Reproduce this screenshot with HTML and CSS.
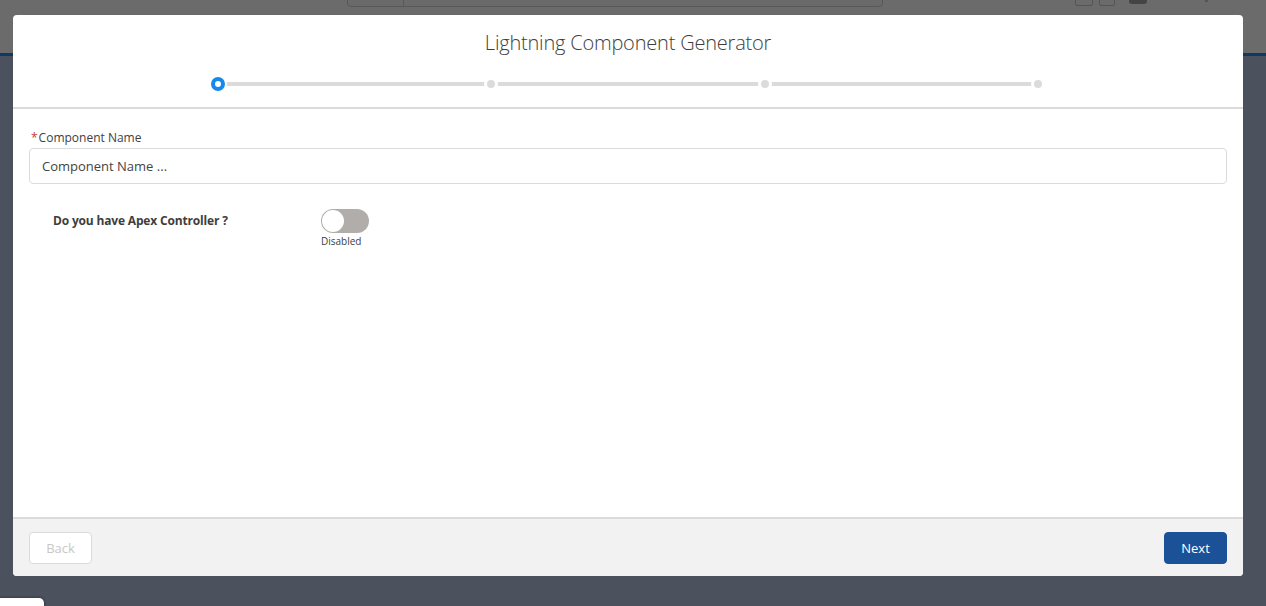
FILE: index.html
```html
<!DOCTYPE html>
<html lang="en">
<head>
<meta charset="utf-8">
<title>Lightning Component Generator</title>
<link rel="stylesheet" href="styles.css">
</head>
<body>
<div class="page">
  <div class="global-header">
    <div class="search-bar"><span class="search-scope"></span></div>
    <div class="header-icons">
      <span class="hicon box"></span>
      <span class="hicon box small"></span>
      <span class="hicon blob"></span>
      <span class="hicon dot"></span>
    </div>
  </div>
  <div class="brand-line"></div>
  <div class="workspace"></div>
  <div class="utility-tab"></div>

  <section class="modal">
    <header class="modal-header">
      <h2 class="modal-title">Lightning Component Generator</h2>
      <div class="progress">
        <div class="progress-bar"></div>
        <ol class="progress-list">
          <li class="step active"></li>
          <li class="step"></li>
          <li class="step"></li>
          <li class="step"></li>
        </ol>
      </div>
    </header>
    <div class="modal-body">
      <label class="field-label"><abbr class="required">*</abbr>Component Name</label>
      <input class="text-input" type="text" placeholder="Component Name ...">
      <div class="toggle-row">
        <span class="toggle-label">Do you have Apex Controller ?</span>
        <div class="toggle">
          <span class="toggle-track"><span class="toggle-knob"></span></span>
          <span class="toggle-state">Disabled</span>
        </div>
      </div>
    </div>
    <footer class="modal-footer">
      <button class="btn btn-neutral" disabled>Back</button>
      <button class="btn btn-brand">Next</button>
    </footer>
  </section>
</div>
</body>
</html>
```
FILE: styles.css
```css
html, body {
  margin: 0;
  padding: 0;
}
body {
  font-family: "Open Sans", "Liberation Sans", sans-serif;
  color: #3e3e3c;
  width: 1266px;
  height: 606px;
  overflow: hidden;
}
.page {
  position: relative;
  width: 1266px;
  height: 606px;
  display: flex;
  flex-direction: column;
  background: #4b515d;
}
.global-header {
  height: 53px;
  background: #6b6b6b;
  position: relative;
  flex: none;
}
.search-bar {
  position: absolute;
  left: 347px;
  top: -6px;
  width: 534px;
  height: 11px;
  border: 1px solid #585858;
  border-radius: 4px;
  background: #6a6a6a;
}
.search-scope {
  position: absolute;
  left: 55px;
  top: 0;
  bottom: 0;
  border-left: 1px solid #585858;
}
.header-icons {
  position: absolute;
  left: 1075px;
  top: -4px;
  display: flex;
  gap: 6px;
  align-items: flex-start;
}
.hicon.box {
  width: 16px;
  height: 8px;
  border: 1px solid #555;
  border-radius: 2px;
}
.hicon.box.small { width: 14px; }
.hicon.blob {
  width: 18px;
  height: 8px;
  background: #444;
  border-radius: 3px;
  margin-left: 8px;
}
.hicon.dot {
  width: 3px;
  height: 6px;
  background: #555;
  margin-left: 52px;
}
.brand-line {
  height: 3px;
  background: #0d3a63;
  flex: none;
}
.workspace { flex: 1; }
.utility-tab {
  position: absolute;
  left: 0;
  bottom: -4px;
  width: 44px;
  height: 12px;
  background: #fff;
  border-radius: 0 5px 0 0;
  box-shadow: 0 0 3px rgba(0,0,0,0.5);
}

.modal {
  position: absolute;
  left: 13px;
  top: 15px;
  width: 1230px;
  height: 561px;
  background: #fff;
  border-radius: 4px;
  display: flex;
  flex-direction: column;
  overflow: hidden;
}
.modal-header {
  border-bottom: 2px solid #dddbda;
  padding: 15px 0 0;
  height: 77px;
  display: flex;
  flex-direction: column;
  align-items: center;
  flex: none;
}
.modal-title {
  margin: 0;
  font-family: "Open Sans", sans-serif;
  font-weight: 300;
  font-size: 20px;
  line-height: 26px;
  color: #3e3e3c;
  letter-spacing: -0.2px;
}
.progress {
  position: relative;
  width: 836px;
  margin-top: 20px;
  height: 16px;
}
.progress-bar {
  position: absolute;
  left: 8px;
  right: 8px;
  top: 6px;
  height: 4px;
  background: #dddbda;
}
.progress-list {
  position: relative;
  list-style: none;
  margin: 0;
  padding: 0;
  display: flex;
  justify-content: space-between;
  height: 16px;
  align-items: center;
}
.step {
  width: 8px;
  height: 8px;
  margin: 0 4px;
  border-radius: 50%;
  background: #dddbda;
  box-shadow: 0 0 0 3px #fff;
}
.step.active {
  width: 6px;
  height: 6px;
  margin: 0 1px;
  background: #fff;
  border: 4px solid #1589ee;
  box-shadow: 0 0 0 2px #fff;
}

.modal-body {
  flex: 1;
  padding: 20px 16px 0;
  display: flex;
  flex-direction: column;
  align-items: flex-start;
}
.field-label {
  font-size: 12px;
  line-height: 18px;
  color: #3e3e3c;
  padding-left: 2px;
}
.required {
  color: #c23934;
  text-decoration: none;
  border: 0;
  margin-right: 1px;
}
.text-input {
  box-sizing: border-box;
  width: 100%;
  height: 36px;
  margin-top: 1px;
  border: 1px solid #dddbda;
  border-radius: 4px;
  padding: 0 12px;
  font-family: "Open Sans", sans-serif;
  font-size: 13px;
  color: #3e3e3c;
  outline: none;
}
.text-input::placeholder {
  color: #444;
  opacity: 1;
}
.toggle-row {
  margin-top: 25px;
  padding-left: 24px;
  display: flex;
  align-items: flex-start;
}
.toggle-label {
  width: 268px;
  font-size: 12px;
  font-weight: 700;
  line-height: 24px;
  color: #3e3e3c;
  letter-spacing: -0.17px;
}
.toggle {
  display: flex;
  flex-direction: column;
  align-items: flex-start;
}
.toggle-track {
  width: 48px;
  height: 24px;
  border-radius: 12px;
  background: #b0adab;
  display: flex;
  align-items: center;
  padding: 0 1px;
  box-sizing: border-box;
}
.toggle-knob {
  width: 22px;
  height: 22px;
  border-radius: 50%;
  background: #fff;
}
.toggle-state {
  font-size: 10px;
  line-height: 14px;
  color: #3e3e3c;
  margin-top: 1px;
}

.modal-footer {
  border-top: 2px solid #dddbda;
  background: #f3f2f2;
  padding: 13px 16px 0;
  box-sizing: border-box;
  height: 59px;
  flex: none;
  display: flex;
  justify-content: space-between;
  align-items: flex-start;
}
.btn {
  width: 63px;
  height: 32px;
  border-radius: 4px;
  font-family: "Open Sans", sans-serif;
  font-size: 13px;
  padding: 0;
}
.btn-neutral {
  background: #fff;
  border: 1px solid #dddbda;
  color: #c9c7c5;
}
.btn-brand {
  background: #1b5297;
  border: 1px solid #1b5297;
  color: #fff;
}
```
